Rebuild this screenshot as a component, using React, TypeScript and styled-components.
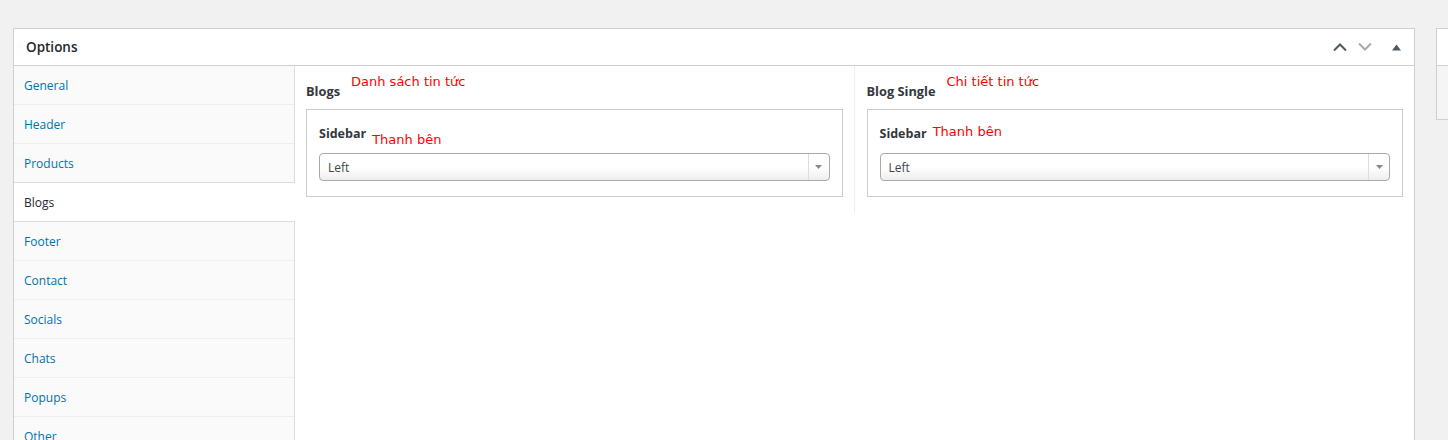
import React from "react";
import styled, { createGlobalStyle } from "styled-components";

const GlobalStyle = createGlobalStyle`
  html, body {
    margin: 0;
    padding: 0;
    background: #f1f1f1;
    overflow: hidden;
  }
  body {
    font-family: "Open Sans", "Noto Sans", sans-serif;
    font-size: 13px;
    color: #23282d;
  }
`;

const Page = styled.div`
  display: flex;
  align-items: flex-start;
  gap: 21px;
  padding: 28px 0 0 13px;
  width: 1700px;
`;

const PostBox = styled.div`
  width: 1400px;
  border: 1px solid #ccd0d4;
  background: #fff;
  flex: none;
`;

const SideBox = styled.div`
  width: 280px;
  border: 1px solid #ccd0d4;
  background: #fff;
  flex: none;
`;

const BoxHeader = styled.div`
  height: 36px;
  border-bottom: 1px solid #ccd0d4;
  display: flex;
  align-items: center;
  padding: 0 13px 0 12px;
`;

const BoxTitle = styled.h2`
  margin: 0;
  flex: 1;
  font-size: 13.5px;
  font-weight: 600;
  color: #23282d;
`;

const HandleButtons = styled.div`
  display: flex;
  align-items: center;
  gap: 11px;
`;

const HandleIcon = styled.svg<{ $muted?: boolean; $spaced?: boolean }>`
  display: block;
  color: ${(p) => (p.$muted ? "#a7aaad" : "#50575e")};
  margin-left: ${(p) => (p.$spaced ? "9px" : "0")};
`;

const SideBoxBody = styled.div`
  height: 53px;
  background: #f5f5f5;
`;

const Body = styled.div`
  display: flex;
  min-height: 420px;
`;

const Tabs = styled.ul`
  list-style: none;
  margin: 0;
  padding: 0;
  width: 280px;
  flex: none;
  background: #fafafa;
  border-right: 1px solid #dcdcde;
`;

const Tab = styled.li<{ $active?: boolean }>`
  height: 36px;
  line-height: 36px;
  padding: 2px 0 0 10px;
  font-size: 12px;
  border-bottom: 1px solid ${(p) => (p.$active ? "#dcdcde" : "#eee")};
  border-top: ${(p) => (p.$active ? "1px solid #dcdcde" : "none")};
  margin: ${(p) => (p.$active ? "-1px -1px 0 0" : "0")};
  background: ${(p) => (p.$active ? "#fff" : "transparent")};
  color: ${(p) => (p.$active ? "#23282d" : "#0073aa")};
`;

const Content = styled.div`
  flex: 1;
  display: grid;
  grid-template-columns: 1fr 1fr;
  align-items: start;
`;

const Column = styled.div<{ $first?: boolean }>`
  padding: 6px 11px 16px ${(p) => (p.$first ? "11px" : "12px")};
  border-right: ${(p) => (p.$first ? "1px solid #eee" : "none")};
`;

const HeadingRow = styled.div`
  display: flex;
  align-items: flex-start;
  gap: 11px;
`;

const Title = styled.div`
  font-weight: 700;
  font-size: 12.8px;
  line-height: 18px;
  margin-top: 10px;
  color: #32373c;
`;

const Note = styled.span<{ $offset: number }>`
  font-family: "DejaVu Sans", Verdana, sans-serif;
  font-size: 13px;
  line-height: 18px;
  color: #f00;
  margin-top: ${(p) => p.$offset}px;
`;

const FieldBox = styled.div`
  margin-top: 9px;
  border: 1px solid #ccc;
  padding: 14px 12px 15px 12px;
`;

const LabelRow = styled.div`
  display: flex;
  align-items: flex-start;
  gap: 6px;
  height: 24px;
`;

const Label = styled.span<{ $offset: number }>`
  font-weight: 700;
  font-size: 12.5px;
  line-height: 18px;
  margin-top: ${(p) => p.$offset}px;
  color: #32373c;
`;

const Select = styled.div`
  margin-top: 5px;
  height: 26px;
  border: 1px solid #aaa;
  border-radius: 4px;
  background: linear-gradient(to bottom, #fff 50%, #eee 100%);
  display: flex;
  align-items: center;
  color: #444;
  font-size: 12px;
`;

const SelectValue = styled.span`
  flex: 1;
  padding-left: 8px;
`;

const SelectArrow = styled.span`
  width: 20px;
  height: 100%;
  border-left: 1px solid #ddd;
  display: flex;
  align-items: center;
  justify-content: center;
  color: #888;
`;

const Chevron = ({ up, muted }: { up?: boolean; muted?: boolean }) => (
  <HandleIcon $muted={muted} width="14" height="8" viewBox="0 0 14 8">
    <path
      d={up ? "M1 7.5 L7 1.5 L13 7.5" : "M1 0.5 L7 6.5 L13 0.5"}
      fill="none"
      stroke="currentColor"
      strokeWidth="2"
    />
  </HandleIcon>
);

const tabs = ["General", "Header", "Products", "Blogs", "Footer", "Contact", "Socials", "Chats", "Popups", "Other"];

const sections = [
  { title: "Blogs", note: "Danh sách tin tức", labelOffset: 1, noteOffset: 7 },
  { title: "Blog Single", note: "Chi tiết tin tức", labelOffset: 1, noteOffset: -1 },
];

export default function App() {
  return (
    <>
      <GlobalStyle />
      <Page>
        <PostBox>
          <BoxHeader>
            <BoxTitle>Options</BoxTitle>
            <HandleButtons>
              <Chevron up />
              <Chevron muted />
              <HandleIcon $spaced width="9" height="7" viewBox="0 0 9 7">
                <polygon points="0,6.5 4.5,0.5 9,6.5" fill="currentColor" />
              </HandleIcon>
            </HandleButtons>
          </BoxHeader>
          <Body>
            <Tabs>
              {tabs.map((t) => (
                <Tab key={t} $active={t === "Blogs"}>
                  {t}
                </Tab>
              ))}
            </Tabs>
            <Content>
              {sections.map((s, i) => (
                <Column key={s.title} $first={i === 0}>
                  <HeadingRow>
                    <Title>{s.title}</Title>
                    <Note $offset={1}>{s.note}</Note>
                  </HeadingRow>
                  <FieldBox>
                    <LabelRow>
                      <Label $offset={s.labelOffset}>Sidebar</Label>
                      <Note $offset={s.noteOffset}>Thanh bên</Note>
                    </LabelRow>
                    <Select>
                      <SelectValue>Left</SelectValue>
                      <SelectArrow>
                        <svg width="7" height="4" viewBox="0 0 7 4">
                          <polygon points="0,0 7,0 3.5,4" fill="currentColor" />
                        </svg>
                      </SelectArrow>
                    </Select>
                  </FieldBox>
                </Column>
              ))}
            </Content>
          </Body>
        </PostBox>
        <SideBox>
          <BoxHeader />
          <SideBoxBody />
        </SideBox>
      </Page>
    </>
  );
}
